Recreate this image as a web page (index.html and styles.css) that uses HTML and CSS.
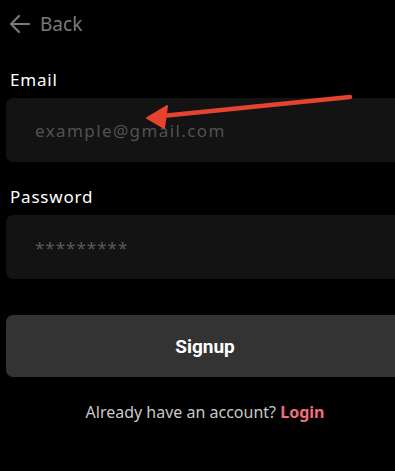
FILE: index.html
```html
<!DOCTYPE html>
<html>
<head>
<meta charset="utf-8">
<link rel="stylesheet" href="styles.css">
</head>
<body>
<div class="page">
  <div class="back">
    <svg class="back-icon" width="22" height="20" viewBox="0 0 22 20"><path d="M20 10H2M10 2L2 10L10 18" fill="none" stroke="#7a7a7a" stroke-width="2.2" stroke-linecap="round" stroke-linejoin="round"/></svg>
    <span class="back-text">Back</span>
  </div>
  <label class="label label-email">Email</label>
  <div class="field"><span class="placeholder">example@gmail.com</span></div>
  <label class="label label-pass">Password</label>
  <div class="field"><span class="placeholder stars">*********</span></div>
  <button class="signup">Signup</button>
  <p class="footer">Already have an account? <span class="login">Login</span></p>
</div>
<svg class="annot" width="395" height="140" viewBox="0 0 395 140">
  <path d="M350 97L162 116" stroke="#e5432f" stroke-width="4.5" stroke-linecap="round"/>
  <path d="M147 118L167 106L164 128Z" fill="#e5432f" stroke="#e5432f" stroke-width="2" stroke-linejoin="round"/>
</svg>
</body>
</html>
```

FILE: styles.css
```css
html, body { margin: 0; padding: 0; background: #000; overflow: hidden; }
body { width: 395px; height: 471px; position: relative; font-family: "Noto Sans", Lato, sans-serif; }
.page { width: 398px; padding: 0 6px; display: flex; flex-direction: column; }
.back { display: flex; align-items: center; gap: 9px; height: 20px; margin-top: 14px; padding-left: 3px; }
.back-icon { display: block; }
.back-text { color: #7a7a7a; font-size: 19px; line-height: 20px; }
.label { color: #fff; font-size: 17px; line-height: 20px; padding-left: 4px; letter-spacing: 0.8px; }
.label-email { margin-top: 36px; }
.label-pass { margin-top: 25px; }
.field { margin-top: 8px; height: 64px; background: #131313; border-radius: 7px; display: flex; align-items: center; padding-left: 29px; }
.placeholder { color: #525252; font-size: 17px; letter-spacing: 1.4px; }
.stars { color: #5a5a5a; font-size: 17px; letter-spacing: 1px; }
.signup { margin-top: 36px; height: 62px; background: #333; border: none; border-radius: 7px; color: #fff; font-family: Roboto, sans-serif; font-weight: 700; font-size: 19px; }
.footer { margin: 24px 0 0; text-align: center; color: #c8c8c8; font-size: 16px; }
.login { color: #ee6e7f; font-weight: 700; }
.annot { position: absolute; left: 0; top: 0; }
```
